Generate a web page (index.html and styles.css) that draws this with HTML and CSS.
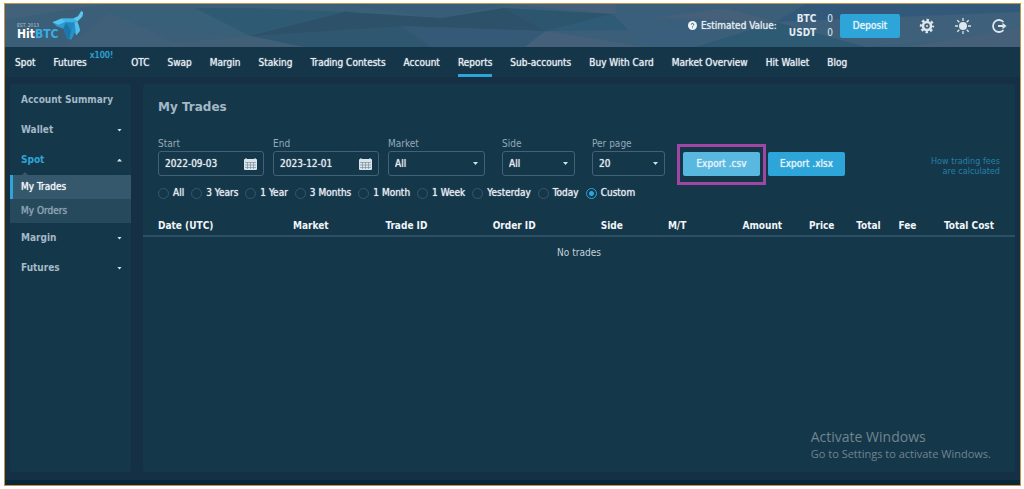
FILE: index.html
```html
<!DOCTYPE html>
<html lang="en">
<head>
<meta charset="utf-8">
<meta name="viewport" content="width=device-width, initial-scale=1">
<title>HitBTC – My Trades</title>
<link rel="stylesheet" href="styles.css">
</head>
<body>
<div class="app">
  <header class="topbar">
    <svg class="topbar-art" viewBox="0 0 1014 43" preserveAspectRatio="none" aria-hidden="true">
      <rect width="1014" height="43" fill="#3b5f78"/>
      <path d="M0 0H100L0 16Z" fill="#41627a"/>
      <path d="M60 43L106 8L180 43Z" fill="#3f6078"/>
      <path d="M100 7L335 6L245 33L130 20Z" fill="#386079"/>
      <path d="M245 32L340 7L520 43H300Z" fill="#2f5870"/>
      <path d="M120 43L245 32L296 43Z" fill="#416078"/>
      <path d="M245 4L340 8L245 32L190 4Z" fill="#2f5a73"/>
      <path d="M245 32L340 8L436 14L498 4L540 27L396 22Z" fill="#2c5168"/>
      <path d="M396 22L540 27L520 43H425Z" fill="#345a77"/>
      <path d="M335 0H500L436 14Z" fill="#375d78"/>
      <path d="M498 4L607 10L540 27Z" fill="#2c566e"/>
      <path d="M500 0H610V10Z" fill="#456078"/>
      <path d="M607 10L540 27L640 26Z" fill="#305b76"/>
      <path d="M540 27L640 43H519Z" fill="#44607a"/>
      <path d="M607 10L720 4L690 43H640Z" fill="#3a5f7c"/>
      <path d="M719 4L770 18L650 14Z" fill="#456078"/>
      <path d="M690 43L770 18L860 43Z" fill="#2f5a74"/>
      <path d="M770 18L800 0H1014V10Z" fill="#33597a"/>
      <path d="M770 18L1014 8V30L860 43Z" fill="#3e607a"/>
      <path d="M900 43L1014 24V43Z" fill="#456078"/>
    </svg>
    <a class="logo" href="#" aria-label="HitBTC home">
      <span class="logo-text"><small>EST. 2013</small><strong>Hit<b>BTC</b></strong></span>
      <svg class="logo-bull" viewBox="132 12 93 88" aria-hidden="true">
        <path d="M133 48L160 37L194 37L208 30L218 14L223 20L220 32L206 46L212 62L214 72L203 86L197 78L189 98L177 97L165 66L146 60Z" fill="#2b9fd8"/>
        <path d="M133 48L160 37L172 46L150 56Z" fill="#57c4ee"/>
        <path d="M160 37L194 37L206 46L172 48Z" fill="#3fb4e6"/>
        <path d="M133 48L150 56L172 48L165 66L146 60Z" fill="#2d9bd2"/>
        <path d="M172 48L198 50L188 72L180 60Z" fill="#2488bd"/>
        <path d="M165 66L172 48L188 72L183 97L177 97Z" fill="#1c76aa"/>
        <path d="M188 72L198 50L202 66L197 78L189 98L183 97Z" fill="#2890c6"/>
        <path d="M198 50L206 46L214 72L203 86Z" fill="#52bfea"/>
        <path d="M194 37L208 30L218 14L223 20L220 32L206 46Z" fill="#5fc6ee"/>
      </svg>
    </a>
    <div class="account">
      <div class="estimate">
        <svg class="help" viewBox="0 0 10 10" aria-hidden="true"><circle cx="5" cy="5" r="5" fill="#f0f4f7"/><path d="M3.6 4a1.4 1.4 0 1 1 2 1.2Q5 5.500 5 6.200M5 7.200V8" fill="none" stroke="#36586f" stroke-width="1"/></svg>
        <span>Estimated Value:</span>
      </div>
      <dl class="balances"><dt>BTC</dt><dd>0</dd><dt>USDT</dt><dd>0</dd></dl>
      <button class="btn deposit" type="button">Deposit</button>
      <div class="tools">
        <button class="tool" type="button" aria-label="Settings"><svg viewBox="0 0 16 16"><g fill="none" stroke="#dce6ec"><circle cx="8" cy="8" r="4" stroke-width="2.600"/><circle cx="8" cy="8" r="6" stroke-width="2.400" stroke-dasharray="2.500 2.212" stroke-dashoffset="1.250"/></g><circle cx="8" cy="8" r="1" fill="#dce6ec"/></svg></button>
        <button class="tool" type="button" aria-label="Light theme"><svg viewBox="0 0 16 16"><circle cx="8" cy="8" r="4" fill="#dce6ec"/><path d="M8 0V3M8 13V16M0 8H3M13 8H16M2.300 2.300L4.300 4.300M11.700 11.700L13.700 13.700M13.700 2.300L11.700 4.300M4.300 11.700L2.300 13.700" stroke="#dce6ec" stroke-width="1.300"/></svg></button>
        <button class="tool" type="button" aria-label="Log out"><svg viewBox="0 0 16 16"><path d="M12.500 4A6 6 0 1 0 12.500 12M7 8H14" fill="none" stroke="#dce6ec" stroke-width="1.800"/><path d="M11.500 4.800L15.500 8L11.500 11.200Z" fill="#dce6ec"/></svg></button>
      </div>
    </div>
  </header>

  <nav class="mainnav" aria-label="Main">
    <a href="#">Spot</a>
    <a href="#">Futures<sup>x100!</sup></a>
    <a href="#">OTC</a>
    <a href="#">Swap</a>
    <a href="#">Margin</a>
    <a href="#">Staking</a>
    <a href="#">Trading Contests</a>
    <a href="#">Account</a>
    <a href="#" class="active" aria-current="page">Reports</a>
    <a href="#">Sub-accounts</a>
    <a href="#">Buy With Card</a>
    <a href="#">Market Overview</a>
    <a href="#">Hit Wallet</a>
    <a href="#">Blog</a>
  </nav>

  <div class="content">
    <aside class="sidebar panel">
      <a class="side-item" href="#">Account Summary</a>
      <button class="side-item" type="button">Wallet<span class="caret"></span></button>
      <button class="side-item open" type="button" aria-expanded="true">Spot<span class="caret up"></span></button>
      <div class="submenu">
        <a class="current" href="#">My Trades</a>
        <a href="#">My Orders</a>
      </div>
      <button class="side-item" type="button">Margin<span class="caret"></span></button>
      <button class="side-item" type="button">Futures<span class="caret"></span></button>
    </aside>

    <main class="panel trades">
      <h1>My Trades</h1>
      <form class="filters">
        <div class="field date">
          <label for="start">Start</label>
          <div class="control"><input id="start" type="text" value="2022-09-03">
            <svg class="calendar" viewBox="0 0 13 12" aria-hidden="true"><rect y="1" width="13" height="11" rx="1" fill="#dbe4ea"/><path d="M2 0V2M11 0V2" stroke="#dbe4ea"/><path d="M1 4.500H12M1 7H12M1 9.500H12M3.500 4V11M6.500 4V11M9.500 4V11" stroke="#6f8695" stroke-width=".6"/></svg></div>
        </div>
        <div class="field date">
          <label for="end">End</label>
          <div class="control"><input id="end" type="text" value="2023-12-01">
            <svg class="calendar" viewBox="0 0 13 12" aria-hidden="true"><rect y="1" width="13" height="11" rx="1" fill="#dbe4ea"/><path d="M2 0V2M11 0V2" stroke="#dbe4ea"/><path d="M1 4.500H12M1 7H12M1 9.500H12M3.500 4V11M6.500 4V11M9.500 4V11" stroke="#6f8695" stroke-width=".6"/></svg></div>
        </div>
        <div class="field market">
          <label for="market">Market</label>
          <div class="control"><select id="market"><option>All</option></select><span class="caret"></span></div>
        </div>
        <div class="field short">
          <label for="side">Side</label>
          <div class="control"><select id="side"><option>All</option></select><span class="caret"></span></div>
        </div>
        <div class="field short">
          <label for="perpage">Per page</label>
          <div class="control"><select id="perpage"><option>20</option></select><span class="caret"></span></div>
        </div>
        <div class="exports">
          <button class="btn export marked" type="button">Export .csv</button>
          <button class="btn export" type="button">Export .xlsx</button>
        </div>
        <a class="fees" href="#">How trading fees<br>are calculated</a>
      </form>
      <div class="periods" role="radiogroup" aria-label="Period">
        <label><input type="radio" name="period">All</label>
        <label><input type="radio" name="period">3 Years</label>
        <label><input type="radio" name="period">1 Year</label>
        <label><input type="radio" name="period">3 Months</label>
        <label><input type="radio" name="period">1 Month</label>
        <label><input type="radio" name="period">1 Week</label>
        <label><input type="radio" name="period">Yesterday</label>
        <label><input type="radio" name="period">Today</label>
        <label><input type="radio" name="period" checked>Custom</label>
      </div>
      <table class="results">
        <colgroup><col class="c-date"><col class="c-market"><col class="c-trade"><col class="c-order"><col class="c-side"><col class="c-mt"><col class="c-amount"><col class="c-price"><col class="c-total"><col class="c-fee"><col class="c-cost"></colgroup>
        <thead><tr><th>Date (UTC)</th><th>Market</th><th>Trade ID</th><th>Order ID</th><th>Side</th><th>M/T</th><th class="num">Amount</th><th class="num">Price</th><th class="num">Total</th><th class="num">Fee</th><th class="num">Total Cost</th></tr></thead>
        <tbody><tr><td colspan="11">No trades</td></tr></tbody>
      </table>
    </main>
  </div>
  <div class="watermark"><p>Activate Windows</p><small>Go to Settings to activate Windows.</small></div>
</div>
</body>
</html>
```
FILE: styles.css
```css
* { box-sizing: border-box; }

body {
  display: flex;
  min-height: 100vh;
  margin: 0;
  padding: 3px 3px 3px 4px;
  background: #fff;
  color: #e3ebf0;
  font: 10px/14px "DejaVu Sans Condensed", "Noto Sans", sans-serif;
}

a { color: inherit; text-decoration: none; }
button, input, select { font: inherit; color: inherit; }
button { padding: 0; border: 0; background: none; cursor: pointer; }

.app {
  position: relative;
  display: flex;
  flex: 1;
  flex-direction: column;
  min-width: 0;
  border: 1px solid #c79345;
  background: #152f44;
}

/* Regular-weight text with a slight glow, halfway to bold */
.estimate,
.btn,
.mainnav,
.submenu,
.control,
.periods { text-shadow: 0 0 1px currentColor; }

/* Top bar */
.topbar {
  position: relative;
  display: flex;
  justify-content: space-between;
  align-items: center;
  height: 43px;
  padding: 0 13px 0 12px;
}
.topbar-art { position: absolute; inset: 0; width: 100%; height: 100%; }
.logo, .account { position: relative; display: flex; align-items: center; }
.logo-text { display: flex; flex-direction: column; padding-top: 12px; }
.logo-text small { font-size: 5px; line-height: 5px; color: #b4c3ce; }
.logo-text strong { font: bold 12px/13px "DejaVu Sans Condensed", sans-serif; color: #fff; }
.logo-text b { color: #38aee2; }
.logo-bull { width: 32px; height: 30px; margin: 0 0 2px -6px; }

.estimate { display: flex; align-items: center; gap: 4px; }
.help { width: 9px; height: 9px; }
.balances {
  display: grid;
  grid-template-columns: auto auto;
  column-gap: 11px;
  margin: 0 7px 0 12px;
  font-weight: bold;
  text-align: right;
}
.balances dd { margin: 0; font-weight: normal; }

.btn {
  height: 24px;
  border-radius: 2px;
  background: #2ea5d8;
  color: #e4f4fb;
}
.deposit { width: 60px; }
.tools { display: flex; gap: 20px; margin-left: 19px; }
.tool { display: flex; }
.tool svg { width: 16px; height: 16px; }

/* Main navigation */
.mainnav {
  display: flex;
  gap: 18px;
  height: 30px;
  padding: 0 10px;
  background: #153649;
}
.mainnav a { display: flex; height: 30px; padding-top: 9px; white-space: nowrap; }
.mainnav .active { border-bottom: 3px solid #2ea5d8; }
.mainnav sup { margin: -8px 0 0 3px; font-size: 9px; line-height: 14px; color: #2ea5d8; }

/* Page columns */
.content {
  display: flex;
  flex: 1;
  gap: 12px;
  padding: 7px 5px 8px;
  border-bottom: 5px solid #062a3a;
}
.panel { border-radius: 3px; background: #15374a; }

.sidebar {
  display: flex;
  flex: 0 0 121px;
  flex-direction: column;
  padding-top: 1px;
  color: #a4b9c6;
}
.side-item {
  display: flex;
  justify-content: space-between;
  align-items: center;
  height: 30px;
  padding: 0 9px 0 11px;
  font-weight: bold;
  white-space: nowrap;
}
.side-item.open { color: #2ea5d8; }
.caret {
  width: 5px;
  height: 3px;
  background: #d5e0e7;
  clip-path: polygon(0 0, 100% 0, 50% 100%);
}
.caret.up { clip-path: polygon(50% 0, 100% 100%, 0 100%); }
.submenu { position: relative; background: #26495c; color: #8ca4b3; }
.submenu::before {
  content: "";
  position: absolute;
  top: -3px;
  left: 12px;
  border: solid transparent;
  border-width: 0 3px 3px;
  border-bottom-color: #36586c;
}
.submenu a {
  display: block;
  padding: 5px 8px;
  border-left: 3px solid transparent;
}
.submenu .current { border-color: #2ea5d8; background: #36586c; color: #f2f6f8; }

/* Trades */
.trades { flex: 1; min-width: 0; }
h1 {
  margin: 0;
  padding: 14px 15px 20px;
  color: #a4b9c6;
  font: bold 12px/18px "DejaVu Sans", sans-serif;
}
.filters { display: flex; align-items: flex-end; padding: 0 15px; }
.field { margin-right: 9px; }
.field label { display: block; line-height: 15px; color: #93aab8; }
.control {
  display: flex;
  align-items: center;
  height: 25px;
  padding: 0 6px;
  border: 1px solid #436178;
  border-radius: 3px;
}
.control input, .control select {
  flex: 1;
  min-width: 0;
  padding: 0;
  border: 0;
  background: none;
  outline: 0;
  appearance: none;
  text-shadow: inherit;
}
.date { width: 106px; }
.market { width: 97px; }
.short { width: 73px; margin-left: 8px; }
.calendar { width: 13px; height: 12px; }
.exports { display: flex; gap: 8px; margin-left: 9px; }
.export { width: 77px; }
.marked { position: relative; background: #59b8df; }
.marked::after {
  content: "";
  position: absolute;
  inset: -8px -6px -9px;
  border: 3px solid #a246a5;
}
.fees {
  margin-left: auto;
  color: #2580aa;
  font-size: 9px;
  line-height: 10px;
  text-align: right;
}

.periods { display: flex; gap: 7px; padding: 10px 15px 11px; }
.periods label { display: flex; align-items: center; gap: 4px; }
.periods input {
  width: 11px;
  height: 11px;
  margin: 0;
  border: 1px solid #36586f;
  border-radius: 50%;
  appearance: none;
}
.periods input:checked {
  border-color: #2ea5d8;
  background: radial-gradient(#2ea5d8 0 2px, transparent 3px);
}

.results { width: 100%; border-collapse: collapse; table-layout: fixed; }
.results th {
  padding: 8px 0 2px;
  border-bottom: 2px solid #2c4f66;
  color: #f0f5f8;
  font-weight: bold;
  text-align: left;
  white-space: nowrap;
}
.results th:first-child { padding-left: 15px; }
.results th:last-child { padding-right: 21px; }
.results .num { text-align: right; }
.results td { padding: 9px 0; text-align: center; color: #c5d2da; }
.c-date { width: 17.2%; }
.c-market { width: 10.6%; }
.c-trade { width: 12.3%; }
.c-order { width: 12.4%; }
.c-side { width: 7.7%; }
.c-mt { width: 6.1%; }
.c-amount { width: 7%; }
.c-price { width: 6%; }
.c-total { width: 5.3%; }
.c-fee { width: 4.1%; }
.c-cost { width: 11.3%; }

/* Desktop notice laid over the page */
.watermark {
  position: absolute;
  right: 29px;
  bottom: 23px;
  color: #71848f;
  font-family: "Open Sans", sans-serif;
  pointer-events: none;
}
.watermark p { margin: 0; font-size: 14px; line-height: 18px; }
.watermark small { display: block; font-size: 11px; line-height: 16px; }
```
